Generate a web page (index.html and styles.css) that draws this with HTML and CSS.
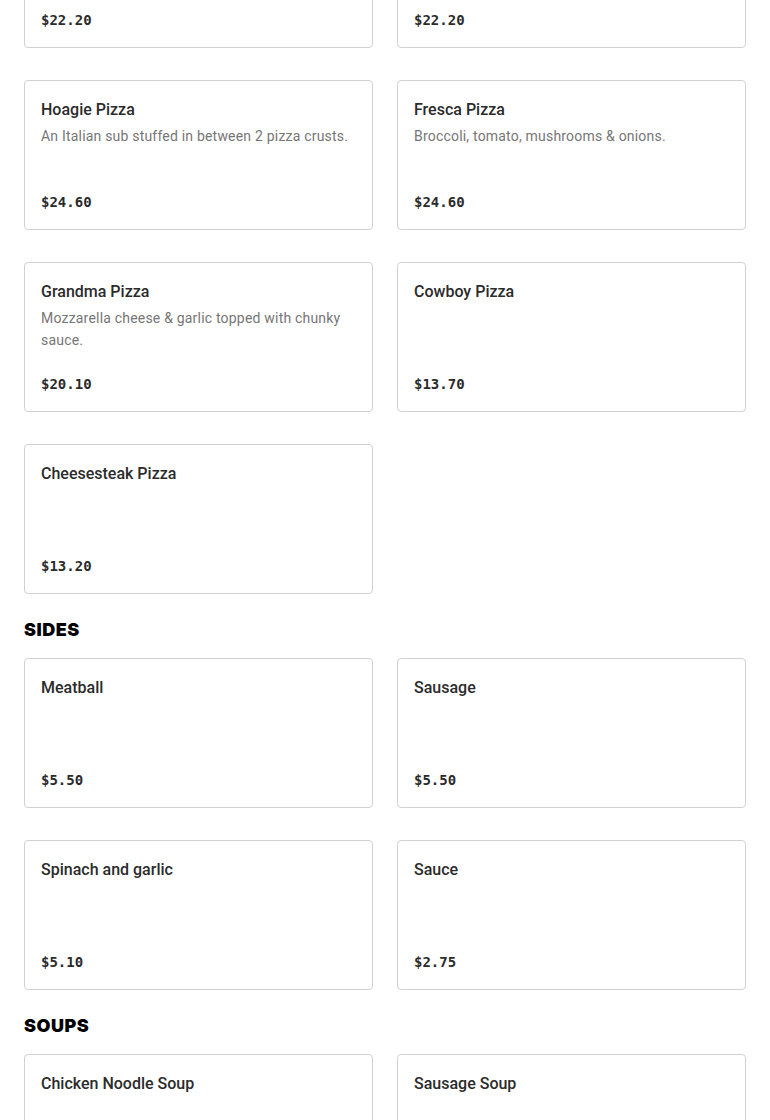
FILE: index.html
```html
<!DOCTYPE html>
<html>
<head>
<meta charset="utf-8">
<link rel="stylesheet" href="styles.css">
</head>
<body>
<main class="menu">
  <section class="section first">
    <div class="grid">
      <div class="card"><div class="title">Pizza</div><div class="price">$22.20</div></div>
      <div class="card"><div class="title">Pizza</div><div class="price">$22.20</div></div>
      <div class="card"><div class="title">Hoagie Pizza</div><div class="desc">An Italian sub stuffed in between 2 pizza crusts.</div><div class="price">$24.60</div></div>
      <div class="card"><div class="title">Fresca Pizza</div><div class="desc">Broccoli, tomato, mushrooms &amp; onions.</div><div class="price">$24.60</div></div>
      <div class="card"><div class="title">Grandma Pizza</div><div class="desc">Mozzarella cheese &amp; garlic topped with chunky sauce.</div><div class="price">$20.10</div></div>
      <div class="card"><div class="title">Cowboy Pizza</div><div class="price">$13.70</div></div>
      <div class="card"><div class="title">Cheesesteak Pizza</div><div class="price">$13.20</div></div>
    </div>
  </section>
  <section class="section">
    <h2 class="heading">SIDES</h2>
    <div class="grid">
      <div class="card"><div class="title">Meatball</div><div class="price">$5.50</div></div>
      <div class="card"><div class="title">Sausage</div><div class="price">$5.50</div></div>
      <div class="card"><div class="title">Spinach and garlic</div><div class="price">$5.10</div></div>
      <div class="card"><div class="title">Sauce</div><div class="price">$2.75</div></div>
    </div>
  </section>
  <section class="section">
    <h2 class="heading">SOUPS</h2>
    <div class="grid">
      <div class="card"><div class="title">Chicken Noodle Soup</div><div class="price">$6.00</div></div>
      <div class="card"><div class="title">Sausage Soup</div><div class="price">$6.00</div></div>
    </div>
  </section>
</main>
</body>
</html>
```
FILE: styles.css
```css
html, body {
  margin: 0;
  padding: 0;
  background: #ffffff;
}
body {
  font-family: Roboto, "Liberation Sans", sans-serif;
  color: #2b2b2b;
  overflow: hidden;
}
.menu {
  padding: 0 24px;
}
.section.first {
  margin-top: -102px;
}
.heading {
  margin: 0;
  padding-top: 24px;
  margin-bottom: 16px;
  font-family: Inter, "Liberation Sans", sans-serif;
  font-weight: 900;
  font-size: 18px;
  line-height: 24px;
  color: #000;
  letter-spacing: 0.5px;
}
.grid {
  display: grid;
  grid-template-columns: 1fr 1fr;
  column-gap: 24px;
  row-gap: 32px;
}
.card {
  box-sizing: border-box;
  min-height: 150px;
  border: 1px solid #d2d2d2;
  border-radius: 4px;
  padding: 16px;
  display: flex;
  flex-direction: column;
}
.title {
  padding-top: 1px;
  font-size: 16px;
  line-height: 24px;
  font-weight: 500;
  color: #2b2b2b;
}
.desc {
  margin-top: 3px;
  font-size: 14px;
  line-height: 22px;
  color: #767676;
  letter-spacing: 0.2px;
}
.price {
  margin-top: auto;
  font-family: "DejaVu Sans Mono", "Liberation Mono", monospace;
  font-weight: bold;
  font-size: 14px;
  line-height: 22px;
  color: #2b2b2b;
}
```
